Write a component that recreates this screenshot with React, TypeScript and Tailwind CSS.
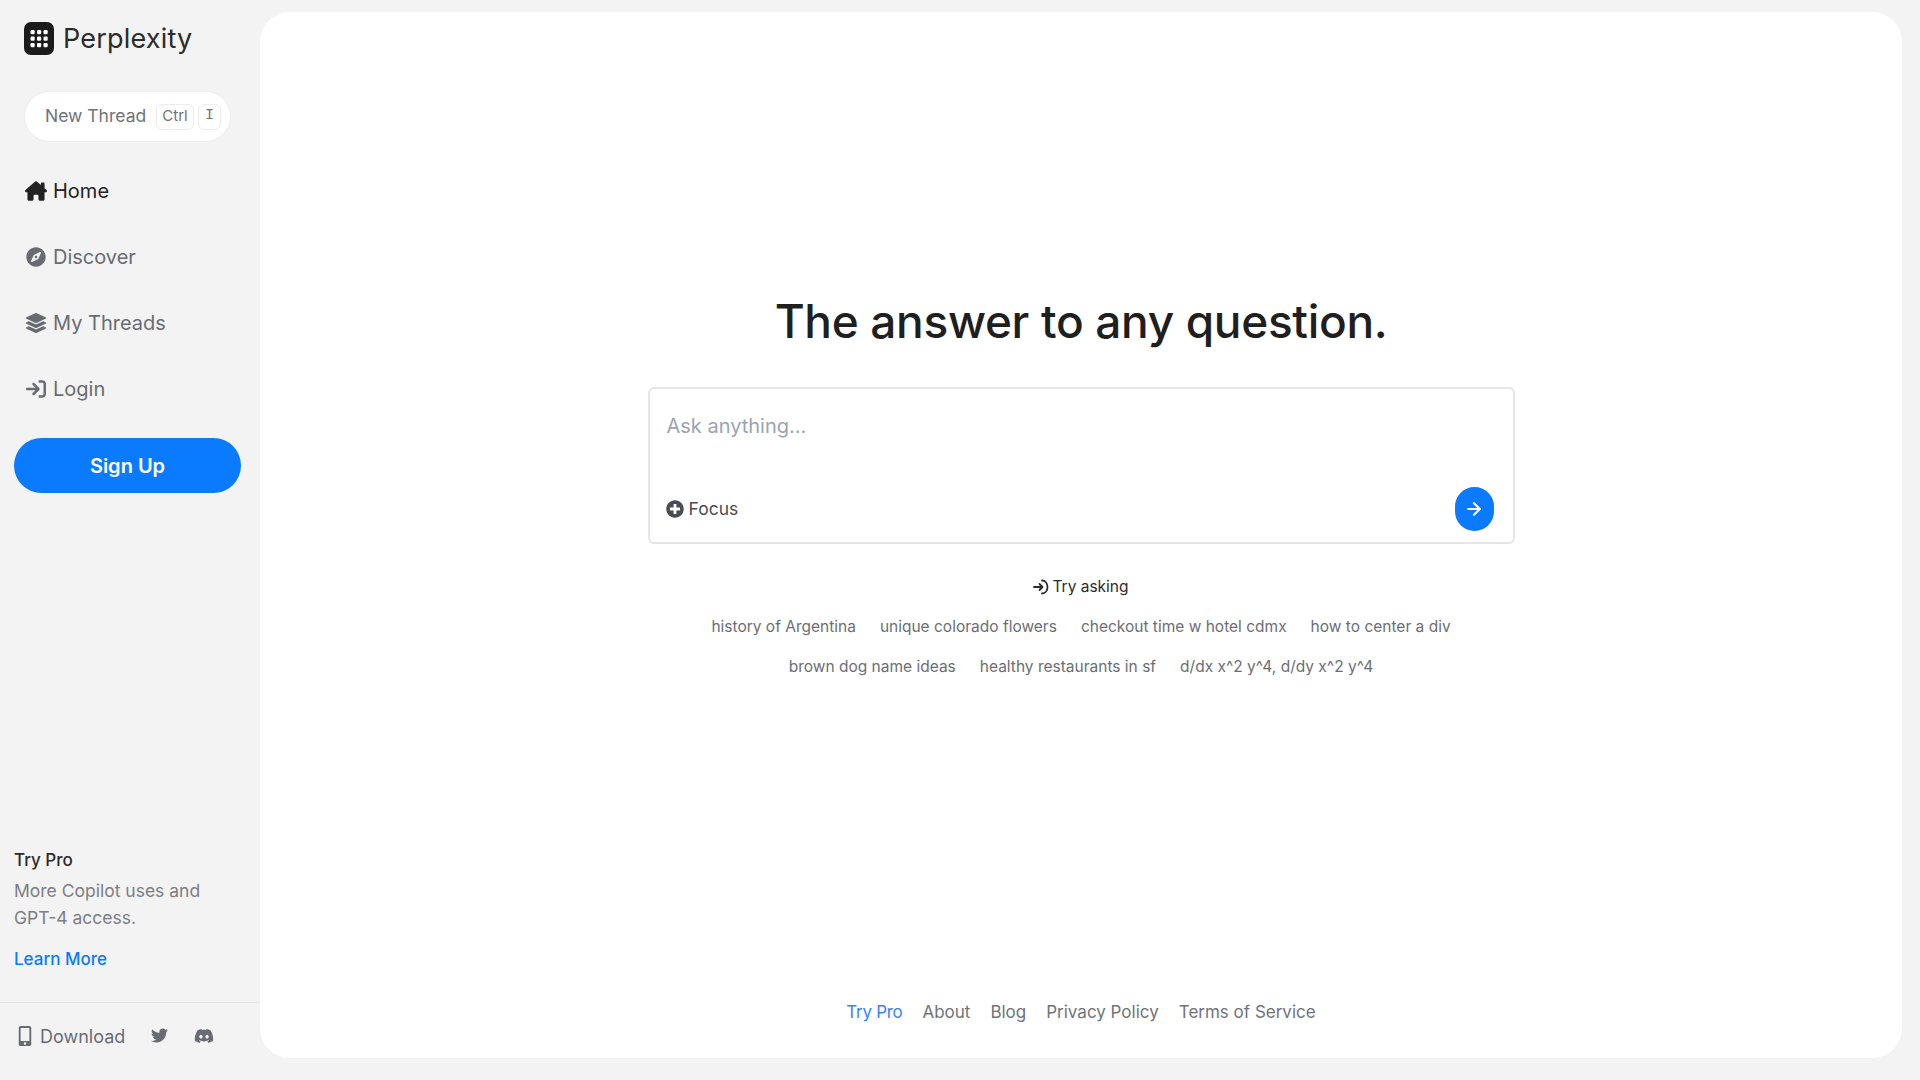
import { FaCompass, FaDiscord, FaLayerGroup, FaMobileAlt, FaPlusCircle, FaTwitter } from 'react-icons/fa';
import { FaArrowRightToBracket, FaHouseChimney } from 'react-icons/fa6';
import { ArrowRight } from 'lucide-react';

const navItems = [
  { label: 'Home', icon: FaHouseChimney, active: true },
  { label: 'Discover', icon: FaCompass },
  { label: 'My Threads', icon: FaLayerGroup },
  { label: 'Login', icon: FaArrowRightToBracket },
];

const suggestions = [
  ['history of Argentina', 'unique colorado flowers', 'checkout time w hotel cdmx', 'how to center a div'],
  ['brown dog name ideas', 'healthy restaurants in sf', 'd/dx x^2 y^4, d/dy x^2 y^4'],
];

const footerLinks = ['About', 'Blog', 'Privacy Policy', 'Terms of Service'];

function Logo() {
  const dots = [0, 1, 2];
  return (
    <svg width="30" height="33" viewBox="0 0 30 33" className="shrink-0">
      <rect width="30" height="33" rx="7" fill="#1b1b1b" />
      {dots.map((row) =>
        dots.map((col) => (
          <rect key={`${row}-${col}`} x={6.5 + col * 6.5} y={8 + row * 6.5} width="4.2" height="4.2" rx="1.2" fill="#fff" />
        )),
      )}
    </svg>
  );
}

function Sidebar() {
  return (
    <aside className="flex h-full w-[260px] shrink-0 flex-col">
      <div className="flex items-center gap-[9px] pl-6 pt-[22px]">
        <Logo />
        <span className="text-[27px] leading-[33px] tracking-[0.2px] text-[#2b2b2b]">Perplexity</span>
      </div>

      <div className="ml-[24px] mt-9 flex h-[51px] w-[207px] items-center rounded-full border border-[#ededed] bg-white pl-5 text-[#70737a]">
        <span className="w-[111px] whitespace-nowrap text-[17.5px]">New Thread</span>
        <span className="flex h-[26px] w-[38px] items-center justify-center rounded-md border border-[#ececec] text-[15px]">Ctrl</span>
        <span className="ml-1 flex h-[26px] w-[23px] items-center justify-center rounded-md border border-[#ececec] font-['Liberation_Mono',monospace] text-[15px]">I</span>
      </div>

      <nav className="ml-[25px] mt-[16px] flex flex-col">
        {navItems.map(({ label, icon: Icon, active }) => (
          <a key={label} className={`flex h-[66px] items-center gap-[6px] ${active ? 'text-[#222222]' : 'text-[#696b73]'}`}>
            <span className="flex w-[22px] justify-center">
              <Icon size={active ? 22 : 20} />
            </span>
            <span className="text-[20px]">{label}</span>
          </a>
        ))}
      </nav>

      <button className="ml-[14px] mt-[16px] h-[55px] w-[227px] rounded-full bg-[#0a7aff] text-[20px] font-semibold text-white">
        Sign Up
      </button>

      <div className="mt-auto pl-[14px]">
        <p className="text-[17px] font-medium leading-[24px] text-[#2b2b2b]">Try Pro</p>
        <p className="mt-[5px] text-[17.5px] leading-[27px] text-[#7c7e85]">
          More Copilot uses and
          <br />
          GPT-4 access.
        </p>
        <a className="mt-[15px] block text-[17px] font-medium leading-[27px] text-[#0a7aff]">Learn More</a>
      </div>

      <div className="mt-[29px] flex h-[78px] items-start border-t border-[#e6e6e6] pl-[15px] pt-[20px] text-[#696b73]">
        <FaMobileAlt size={20} className="mt-[3px]" />
        <span className="ml-[5px] text-[18px] leading-[27px]">Download</span>
        <FaTwitter size={17} className="ml-[26px] mt-[4px]" />
        <FaDiscord size={20} className="ml-[26px] mt-[3px]" />
      </div>
    </aside>
  );
}

function SearchBox() {
  return (
    <div className="flex h-[157px] w-[867px] flex-col rounded-md border-2 border-[#e6e6e6] bg-white pl-[16px] pr-[19px]">
      <p className="ml-[1px] mt-[22px] text-[20px] leading-[30px] text-[#9ca3af]">Ask anything...</p>
      <div className="mt-auto mb-[11px] flex items-center justify-between">
        <button className="flex items-center gap-[5px] text-[#4a4c53]">
          <FaPlusCircle size={18} />
          <span className="text-[17.5px]">Focus</span>
        </button>
        <button className="flex h-[44px] w-[39px] items-center justify-center rounded-full bg-[#0a7aff] text-white">
          <ArrowRight size={20} strokeWidth={2.5} />
        </button>
      </div>
    </div>
  );
}

function TryAsking() {
  return (
    <div className="mt-[29px] flex flex-col items-center">
      <div className="flex h-[28px] items-center gap-[3px] text-[15.5px] text-[#2b2b2b]">
        <svg width="16" height="16" viewBox="0 0 16 16" fill="none" stroke="currentColor" strokeWidth="1.8" strokeLinecap="round" strokeLinejoin="round">
          <path d="M1 8h8M6.5 5l3 3-3 3M9 1.5c3.5 0 5.5 3 5.5 6.5s-2 6.5-5.5 6.5" />
        </svg>
        <span>Try asking</span>
      </div>
      <div className="mt-[12px] flex flex-col gap-[12px]">
        {suggestions.map((row) => (
          <div key={row[0]} className="flex justify-center gap-[24px]">
            {row.map((text) => (
              <a key={text} className="text-[15.5px] leading-[28px] text-[#6b6e76]">
                {text}
              </a>
            ))}
          </div>
        ))}
      </div>
    </div>
  );
}

export default function App() {
  return (
    <div className="flex h-screen w-full overflow-hidden bg-[#f3f3f3] font-['Inter','Liberation_Sans',sans-serif]">
      <Sidebar />
      <main className="mb-[22px] mr-[18px] mt-[12px] flex flex-1 flex-col items-center rounded-[30px] bg-white">
        <h1 className="mt-[277px] text-[46px] font-medium leading-[64px] tracking-[-0.33px] text-[#1f1f1f]">The answer to any question.</h1>
        <div className="mt-[34px]">
          <SearchBox />
        </div>
        <TryAsking />
        <footer className="mb-[32px] mt-auto flex gap-[20px] text-[17px] leading-[28px] text-[#70737a]">
          <a className="tracking-[-0.3px] text-[#3b82f6]">Try Pro</a>
          {footerLinks.map((link) => (
            <a key={link}>{link}</a>
          ))}
        </footer>
      </main>
    </div>
  );
}
